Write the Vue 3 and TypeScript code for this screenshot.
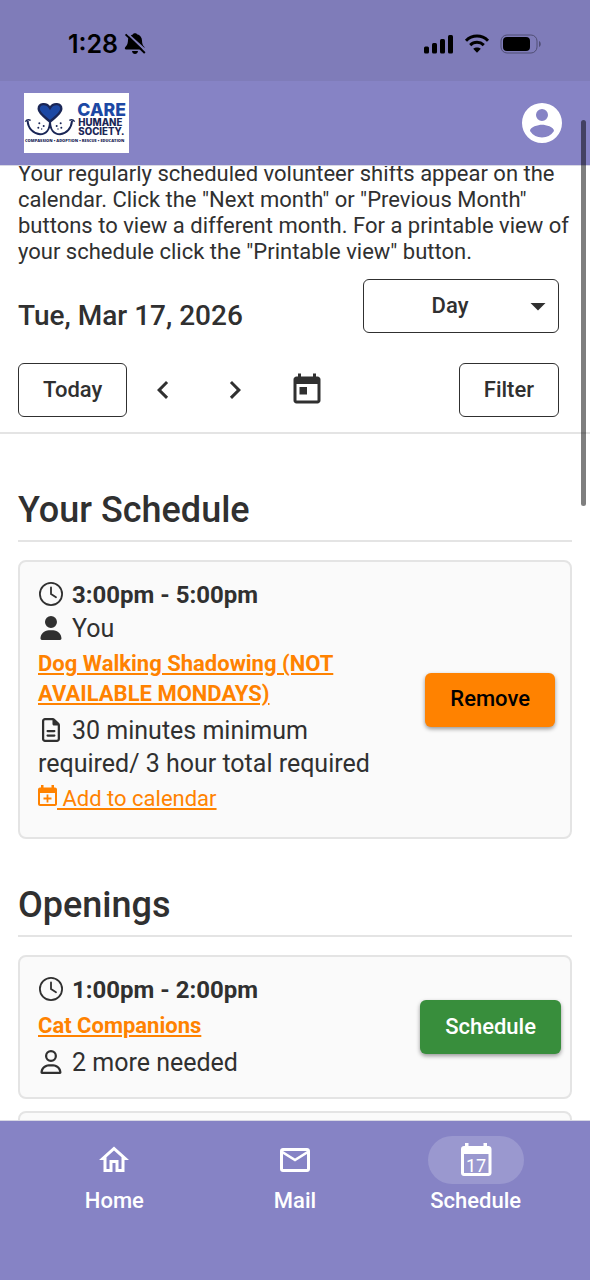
<script setup lang="ts">
import { ref } from 'vue'

interface NavItem {
  id: string
  label: string
}

const view = ref<string>('Day')
const views: string[] = ['Day', 'Week', 'Month']
const navItems: NavItem[] = [
  { id: 'home', label: 'Home' },
  { id: 'mail', label: 'Mail' },
  { id: 'schedule', label: 'Schedule' },
]
const activeNav = ref<string>('schedule')
</script>

<template>
  <div class="shell">
    <div class="status">
      <div class="status-group clock">
        <span>1:28</span>
        <svg width="22" height="24" viewBox="0 0 22 24" aria-hidden="true">
          <path d="M5.2 4.6 18.6 17.6H2.2C.4 17.6.4 16 1.8 14.6 3.8 12.600 3.900 10 4 8 4.100 6.600 4.500 5.500 5.200 4.600Z" />
          <path d="M6.800 3.400C7.800 2.700 8.800 2.400 9 2.200 9.300.9 12.700.9 13 2.200 16 3 17.900 5.300 18 8.600 18.100 11.500 18.500 13.200 20 14.600 20.400 15 20.700 15.500 20.700 16Z" />
          <path d="M8 19.100H14C13.800 20.900 12.600 22 11 22S8.200 20.900 8 19.100Z" />
          <path class="slash" d="M1.600 2.400 20.800 21" />
        </svg>
      </div>
      <div class="status-group">
        <svg width="30" height="20" viewBox="0 0 30 20" aria-hidden="true">
          <rect x="0" y="12.500" width="5" height="7" rx="1.500" />
          <rect x="8" y="9" width="5" height="10.500" rx="1.500" />
          <rect x="16" y="5" width="5" height="14.500" rx="1.500" />
          <rect x="24" y="1" width="5" height="18.500" rx="1.500" />
        </svg>
        <svg class="wifi" width="26" height="20" viewBox="0 0 26 20" aria-hidden="true">
          <path class="arc" d="M2 6.700C8.200.5 17.800.5 24 6.700M6.200 11.100C10.100 7.400 15.900 7.400 19.800 11.100" />
          <path d="M9.200 14.800C11.400 12.900 14.600 12.900 16.800 14.800L13 18.800Z" />
        </svg>
        <svg width="42" height="20" viewBox="0 0 42 20" aria-hidden="true">
          <rect class="case" x="1" y="1" width="36" height="18" rx="6" />
          <rect x="3" y="3" width="27" height="14" rx="4" />
          <path class="tip" d="M39 7C41.300 8 41.300 12 39 13Z" />
        </svg>
      </div>
    </div>

    <header class="appbar">
      <svg class="logo" viewBox="0 0 315 180" role="img" aria-label="Care Humane Society">
        <rect width="315" height="180" fill="#fff" />
        <path class="heart" d="M78 86C62 72 44 60 44 48 44 30 68 28 78 45 88 28 112 30 112 48 112 60 94 72 78 86Z" />
        <path class="smile" d="M78 84C78 110 66 124 48 124 28 122 12 106 11 84M78 84C78 110 90 124 108 124 128 122 142 106 144 84" />
        <path class="cheek" d="M4 86C8 80 14 79 20 82M136 82C142 79 148 80 152 86" />
        <g class="dots">
          <circle cx="46" cy="91" r="3" /><circle cx="59" cy="99" r="3" /><circle cx="43" cy="104" r="3" /><circle cx="53" cy="108" r="2" />
          <circle cx="110" cy="91" r="3" /><circle cx="98" cy="99" r="3" /><circle cx="112" cy="104" r="3" /><circle cx="102" cy="108" r="2" />
        </g>
        <text class="logo-care" x="160" y="70">CARE</text>
        <text class="logo-name" x="163" y="99">HUMANE</text>
        <text class="logo-name" x="163" y="127">SOCIETY.</text>
        <text class="logo-tag" x="3" y="147">COMPASSION • ADOPTION • RESCUE • EDUCATION</text>
      </svg>
      <button class="avatar" type="button" aria-label="Account">
        <svg width="48" height="48" viewBox="0 0 24 24" aria-hidden="true">
          <path fill-rule="evenodd" d="M12 2a10 10 0 1 0 0 20 10 10 0 0 0 0-20zm0 3a3 3 0 1 1 0 6 3 3 0 0 1 0-6zm0 14.200a7.200 7.200 0 0 1-6-3.220c.03-1.990 4-3.080 6-3.080s5.970 1.090 6 3.080a7.200 7.200 0 0 1-6 3.220z" />
        </svg>
      </button>
    </header>

    <main class="content">
      <p class="intro">
        Your regularly scheduled volunteer shifts appear on the calendar. Click the "Next month" or "Previous Month"
        buttons to view a different month. For a printable view of your schedule click the "Printable view" button.
      </p>

      <div class="toolbar">
        <div class="row title-row">
          <h1>Tue, Mar 17, 2026</h1>
          <div class="select-wrap">
            <select v-model="view" aria-label="Calendar view">
              <option v-for="v in views" :key="v">{{ v }}</option>
            </select>
            <svg width="36" height="36" viewBox="0 0 24 24" aria-hidden="true"><path d="M7 10l5 5 5-5z" /></svg>
          </div>
        </div>
        <div class="row">
          <div class="stepper">
            <button class="outlined" type="button">Today</button>
            <button class="icon-btn" type="button" aria-label="Previous day">
              <svg width="36" height="36" viewBox="0 0 24 24"><path d="M15.410 16.580 10.830 12l4.580-4.590L14 6l-6 6 6 6z" /></svg>
            </button>
            <button class="icon-btn" type="button" aria-label="Next day">
              <svg width="36" height="36" viewBox="0 0 24 24"><path d="M8.590 16.580 13.170 12 8.590 7.410 10 6l6 6-6 6z" /></svg>
            </button>
            <button class="icon-btn" type="button" aria-label="Pick a date">
              <svg width="36" height="36" viewBox="0 0 24 24"><path d="M19 3h-1V1h-2v2H8V1H6v2H5c-1.110 0-1.990.9-1.990 2L3 19c0 1.100.89 2 2 2h14c1.100 0 2-.9 2-2V5c0-1.100-.9-2-2-2zm0 16H5V8h14v11zM7 10h5v5H7z" /></svg>
            </button>
          </div>
          <button class="outlined" type="button">Filter</button>
        </div>
      </div>

      <section class="group">
        <h2>Your Schedule</h2>
        <article class="card">
          <div class="details">
            <p class="line time">
              <svg class="ico" viewBox="0 0 26 24" aria-hidden="true"><circle class="ring" cx="13" cy="12" r="11.100" /><path class="ring" d="M13 5.500V12L18 15.200" /></svg>3:00pm - 5:00pm
            </p>
            <p class="line">
              <svg class="ico" viewBox="-53 0 555 512" aria-hidden="true"><path d="M224 256A128 128 0 1 0 224 0a128 128 0 1 0 0 256zm-45.700 48C79.800 304 0 383.800 0 482.300 0 498.700 13.300 512 29.700 512H418.300c16.400 0 29.700-13.300 29.700-29.700C448 383.800 368.200 304 269.700 304H178.300z" /></svg>You
            </p>
            <p class="role"><a href="#dog-walking">Dog Walking Shadowing (NOT AVAILABLE MONDAYS)</a></p>
            <p class="line">
              <svg class="ico" viewBox="-85 0 555 512" aria-hidden="true"><path d="M64 464c-8.800 0-16-7.200-16-16V64c0-8.800 7.200-16 16-16H224v80c0 17.700 14.300 32 32 32h80V448c0 8.800-7.200 16-16 16H64zM64 0C28.700 0 0 28.700 0 64V448c0 35.300 28.700 64 64 64H320c35.300 0 64-28.700 64-64V154.500c0-17-6.700-33.300-18.700-45.300L274.700 18.700C262.700 6.700 246.500 0 229.500 0H64zm56 256c-13.300 0-24 10.700-24 24s10.700 24 24 24H264c13.300 0 24-10.700 24-24s-10.700-24-24-24H120zm0 96c-13.300 0-24 10.700-24 24s10.700 24 24 24H264c13.300 0 24-10.700 24-24s-10.700-24-24-24H120z" /></svg>30 minutes minimum required/ 3 hour total required
            </p>
            <p class="add">
              <a href="#add-to-calendar"><svg width="19" height="22" viewBox="0 0 19 22" aria-hidden="true"><path fill-rule="evenodd" d="M3 0H5.500V2.500H13.500V0H16V2.500H17C18 2.500 19 3.300 19 4.500V19C19 20.200 18 21 17 21H2C1 21 0 20.200 0 19V4.500C0 3.300 1 2.500 2 2.500H3ZM2 8V19H17V8ZM8.600 9.500H10.400V12.600H13.500V14.400H10.400V17.500H8.600V14.400H5.500V12.600H8.600Z" /></svg> Add to calendar</a>
            </p>
          </div>
          <button class="filled remove" type="button">Remove</button>
        </article>
      </section>

      <section class="group">
        <h2>Openings</h2>
        <article class="card opening">
          <div class="details">
            <p class="line time">
              <svg class="ico" viewBox="0 0 26 24" aria-hidden="true"><circle class="ring" cx="13" cy="12" r="11.100" /><path class="ring" d="M13 5.500V12L18 15.200" /></svg>1:00pm - 2:00pm
            </p>
            <p class="role"><a href="#cat-companions">Cat Companions</a></p>
            <p class="line">
              <svg class="ico" viewBox="-53 0 555 512" aria-hidden="true"><path d="M304 128a80 80 0 1 0-160 0 80 80 0 1 0 160 0zM96 128a128 128 0 1 1 256 0A128 128 0 1 1 96 128zM49.300 464H398.700c-8.900-63.300-63.300-112-129-112H178.300c-65.700 0-120.100 48.700-129 112zM0 482.300C0 383.800 79.800 304 178.300 304h91.400C368.200 304 448 383.800 448 482.300c0 16.400-13.300 29.700-29.700 29.700H29.700C13.300 512 0 498.700 0 482.300z" /></svg>2 more needed
            </p>
          </div>
          <button class="filled schedule" type="button">Schedule</button>
        </article>
        <article class="card opening"><div class="details"></div></article>
      </section>
    </main>

    <nav class="tabs" aria-label="Main">
      <a
        v-for="item in navItems"
        :key="item.id"
        class="tab"
        :class="{ active: item.id === activeNav }"
        :href="'#' + item.id"
        @click="activeNav = item.id"
      >
        <span class="pill">
          <svg width="36" height="36" viewBox="0 0 36 36" aria-hidden="true">
            <path v-if="item.id === 'home'" d="M18 8.500 25.500 15.300V27H22.500V18H13.500V27H10.500V15.300L18 8.500M18 4.500 3 18H7.500V30H16.500V21H19.500V30H28.500V18H33" />
            <path v-else-if="item.id === 'mail'" d="M33 9C33 7.300 31.700 6 30 6H6C4.300 6 3 7.300 3 9V27C3 28.700 4.300 30 6 30H30C31.700 30 33 28.700 33 27V9M30 9 18 16.500 6 9H30M30 27H6V12L18 19.500 30 12V27Z" />
            <template v-else>
              <path fill-rule="evenodd" d="M7 1H10.500V4H25.500V1H29V4H30.500C32 4 33.500 5.300 33.500 7V31C33.500 32.700 32 34 30.500 34H6C4.300 34 3 32.700 3 31V7C3 5.300 4.300 4 6 4H7ZM6 12V31H30.500V12Z" />
              <text class="day" x="18" y="30">17</text>
            </template>
          </svg>
        </span>
        <span class="tab-label">{{ item.label }}</span>
      </a>
    </nav>

    <div class="scroll-thumb" aria-hidden="true"></div>
  </div>
</template>

<style>
body {
  background: #fff;
}
</style>

<style scoped>
.shell {
  position: relative;
  display: flex;
  flex-direction: column;
  height: 100vh;
  overflow: hidden;
  font-family: Roboto, "Noto Sans", sans-serif;
  font-size: 22px;
  color: #303030;
}

h1,
h2,
p {
  margin: 0;
}

button,
select {
  font: inherit;
  font-weight: 500;
  color: inherit;
  cursor: pointer;
}

svg {
  display: block;
  fill: currentColor;
}

.status {
  display: flex;
  flex: none;
  justify-content: space-between;
  align-items: center;
  padding: 28px 48px 21px 68px;
  background: #7f7cb9;
  color: #000;
}

.status-group {
  display: flex;
  align-items: center;
  gap: 10px;
}

.clock {
  gap: 6px;
  font: 600 25px/32px Inter, sans-serif;
}

.slash {
  fill: none;
  stroke: currentColor;
  stroke-width: 2;
}

.arc {
  fill: none;
  stroke: currentColor;
  stroke-width: 3;
}

.case {
  fill: none;
  stroke: #504e75;
  stroke-width: 1;
}

.tip {
  fill: #504e75;
}

.appbar {
  z-index: 1;
  display: flex;
  flex: none;
  justify-content: space-between;
  align-items: center;
  padding: 12px 24px;
  background: #8683c5;
  border-bottom: 1px solid #d8d8e4;
}

.logo {
  width: 105px;
  height: 60px;
}

.heart {
  fill: #1c48a4;
  stroke: #1a2656;
  stroke-width: 7;
}

.smile {
  fill: none;
  stroke: #1a2656;
  stroke-width: 6;
}

.cheek {
  fill: none;
  stroke: #1a2656;
  stroke-width: 4;
}

.dots {
  fill: #1a2656;
}

.logo-care {
  font: 800 53px Inter, sans-serif;
  fill: #1c48a4;
}

.logo-name {
  font: 800 29px Inter, sans-serif;
  fill: #1a2656;
}

.logo-tag {
  font: 800 12px "Open Sans", sans-serif;
  fill: #1a2656;
}

.avatar {
  padding: 0;
  border: 0;
  background: none;
  color: #fff;
}

.content {
  flex: 1;
  min-height: 0;
  margin-top: -5px;
  overflow: hidden;
}

.intro {
  padding: 0 18px;
  line-height: 26px;
}

.toolbar {
  display: flex;
  flex-direction: column;
  gap: 30px;
  padding: 14px 31px 15px 18px;
  border-bottom: 2px solid #e4e4e4;
}

.row {
  display: flex;
  justify-content: space-between;
  align-items: center;
}

.title-row {
  align-items: flex-end;
}

h1 {
  font-size: 28px;
  font-weight: 500;
  line-height: 34px;
}

.select-wrap {
  display: grid;
  align-items: center;
  width: 196px;
}

.select-wrap > * {
  grid-area: 1 / 1;
}

.select-wrap svg {
  justify-self: end;
  margin-right: 3px;
  pointer-events: none;
}

select {
  appearance: none;
  height: 54px;
  padding: 0 30px 2px 8px;
  border: 1px solid #303030;
  border-radius: 6px;
  background: transparent;
  text-align: center;
  text-align-last: center;
}

.stepper {
  display: flex;
}

.outlined {
  height: 54px;
  padding: 0 24px 2px;
  border: 1px solid #303030;
  border-radius: 6px;
  background: #fff;
}

.icon-btn {
  display: grid;
  place-items: center;
  width: 72px;
  padding: 0;
  border: 0;
  background: none;
}

.group {
  padding: 0 18px;
}

.toolbar + .group {
  padding-top: 52px;
}

.group + .group {
  padding-top: 42px;
}

h2 {
  padding-bottom: 6px;
  border-bottom: 2px solid #e4e4e4;
  margin-bottom: 18px;
  font-size: 36px;
  font-weight: 500;
  line-height: 48px;
}

.card {
  display: flex;
  justify-content: space-between;
  align-items: center;
  gap: 40px;
  padding: 0 15px 0 18px;
  border: 2px solid #e4e4e4;
  border-radius: 8px;
  background: #fafafa;
}

.card.opening {
  padding-right: 9px;
}

.card + .card {
  margin-top: 12px;
}

.details {
  flex: 1;
  padding: 17px 0 23px;
}

.opening .details {
  padding-bottom: 18px;
}

.line {
  font-size: 25px;
  line-height: 33px;
}

.time {
  font-size: 24px;
  font-weight: 700;
}

.ico {
  display: inline-block;
  width: 26px;
  height: 24px;
  margin-right: 8px;
  vertical-align: -3px;
}

.ring {
  fill: none;
  stroke: currentColor;
  stroke-width: 1.800;
  stroke-linecap: round;
}

a {
  color: #ff8200;
}

.role {
  margin: 4px 0 5px;
  font-weight: 700;
  line-height: 30px;
}

.add {
  margin-top: 4px;
  line-height: 30px;
}

.add svg {
  display: inline-block;
  vertical-align: -1px;
}

.filled {
  flex: none;
  height: 54px;
  padding: 0 25px 2px;
  border: 0;
  border-radius: 6px;
  box-shadow: 0 2px 4px rgba(0, 0, 0, 0.4);
}

.remove {
  background: #ff8200;
  color: #000;
}

.schedule {
  background: #388e3c;
  color: #fff;
}

.tabs {
  z-index: 1;
  display: flex;
  flex: none;
  padding: 15px 24px 67px;
  border-top: 1px solid #d8d8e4;
  background: #8683c5;
}

.tab {
  display: flex;
  flex: 1;
  flex-direction: column;
  align-items: center;
  gap: 5px;
  color: #fff;
  text-decoration: none;
}

.pill {
  display: grid;
  place-items: center;
  width: 96px;
  height: 48px;
  border-radius: 24px;
}

.active .pill {
  background: #9a98cf;
}

.tab-label {
  font-weight: 500;
  line-height: 24px;
}

.day {
  font-size: 18px;
  text-anchor: middle;
}

.scroll-thumb {
  position: absolute;
  z-index: 2;
  top: 120px;
  right: 4px;
  width: 5px;
  height: 386px;
  border-radius: 3px;
  background: rgba(0, 0, 0, 0.5);
}
</style>
